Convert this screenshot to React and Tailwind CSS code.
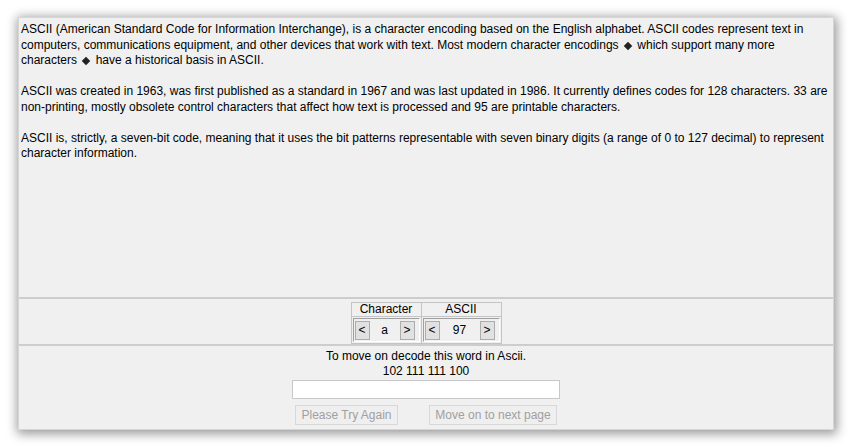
import React, { useState } from 'react';

const Stepper = ({ value, mid }) => (
  <div className="flex items-center h-[24px] border border-t-[#a0a0a0] border-l-[#a0a0a0] border-b-white border-r-white pl-[1px] pr-[4px]">
    <button className="w-[15px] h-[19px] bg-[#e1e1e1] border border-[#adadad] text-[12px] leading-none flex items-center justify-center">&lt;</button>
    <span className={`${mid} text-center text-[12px]`}>{value}</span>
    <button className="w-[15px] h-[19px] bg-[#e1e1e1] border border-[#adadad] text-[12px] leading-none flex items-center justify-center">&gt;</button>
  </div>
);

// the odd diamond glyph the source text shows
const Diamond = () => (
  <span className="inline-flex w-[12px] h-[9px] items-center justify-center">
    <span className="block w-[6px] h-[6px] bg-[#222] rotate-45" />
  </span>
);

const App = () => {
  const [word, setWord] = useState('');

  return (
    <div className="w-[851px] h-[448px] bg-white pt-[17px] pl-[18px] font-['Liberation_Sans',Arial,sans-serif] text-black">
      <div className="w-[816px] h-[413px] bg-[#f0f0f0] border border-[#d6d6d6] shadow-[1px_2px_10px_2px_rgba(0,0,0,0.4)] flex flex-col">
        {/* Info text */}
        <div className="h-[279px] px-[2px] pt-[4px] text-[12px] leading-[15.5px] space-y-[15.5px]">
          <p>
            ASCII (American Standard Code for Information Interchange), is a character encoding based on the English alphabet. ASCII codes represent text in computers, communications equipment, and other devices that work with text. Most modern character encodings <Diamond /> which support many more characters <Diamond /> have a historical basis in ASCII.
          </p>
          <p>
            ASCII was created in 1963, was first published as a standard in 1967 and was last updated in 1986. It currently defines codes for 128 characters. 33 are non-printing, mostly obsolete control characters that affect how text is processed and 95 are printable characters.
          </p>
          <p>
            ASCII is, strictly, a seven-bit code, meaning that it uses the bit patterns representable with seven binary digits (a range of 0 to 127 decimal) to represent character information.
          </p>
        </div>

        <div className="h-[2px] bg-[#cdcdcd]" />

        {/* Converter */}
        <div className="h-[45px] flex justify-center pt-[3px]">
          <table className="border-collapse border border-[#c4c4c4] text-[12px] h-[41px]">
            <thead>
              <tr className="h-[14px] leading-[13px]">
                <th className="w-[70px] font-normal border border-[#c4c4c4]">Character</th>
                <th className="w-[80px] font-normal border border-[#c4c4c4]">ASCII</th>
              </tr>
            </thead>
            <tbody>
              <tr>
                <td className="border border-[#c4c4c4] p-[1px]">
                  <Stepper value="a" mid="w-[30px]" />
                </td>
                <td className="border border-[#c4c4c4] p-[1px]">
                  <Stepper value="97" mid="w-[40px]" />
                </td>
              </tr>
            </tbody>
          </table>
        </div>

        <div className="h-[2px] bg-[#cdcdcd]" />

        {/* Decode */}
        <div className="flex flex-col items-center text-[12px] leading-[15px] pt-[3px]">
          <p>To move on decode this word in Ascii.</p>
          <p>102 111 111 100</p>
          <input
            value={word}
            onChange={(e) => setWord(e.target.value)}
            className="mt-[1px] w-[268px] h-[19px] bg-white border border-[#c8c8c8] outline-none px-1 text-[12px]"
          />
          <div className="flex gap-[31px] mt-[6px]">
            <button disabled className="w-[103px] h-[20px] border border-[#d8d8d8] bg-[#efefef] text-[#a0a0a0] text-[12px]">Please Try Again</button>
            <button disabled className="w-[128px] h-[20px] border border-[#d8d8d8] bg-[#efefef] text-[#a0a0a0] text-[12px]">Move on to next page</button>
          </div>
        </div>
      </div>
    </div>
  );
};

export default App;
